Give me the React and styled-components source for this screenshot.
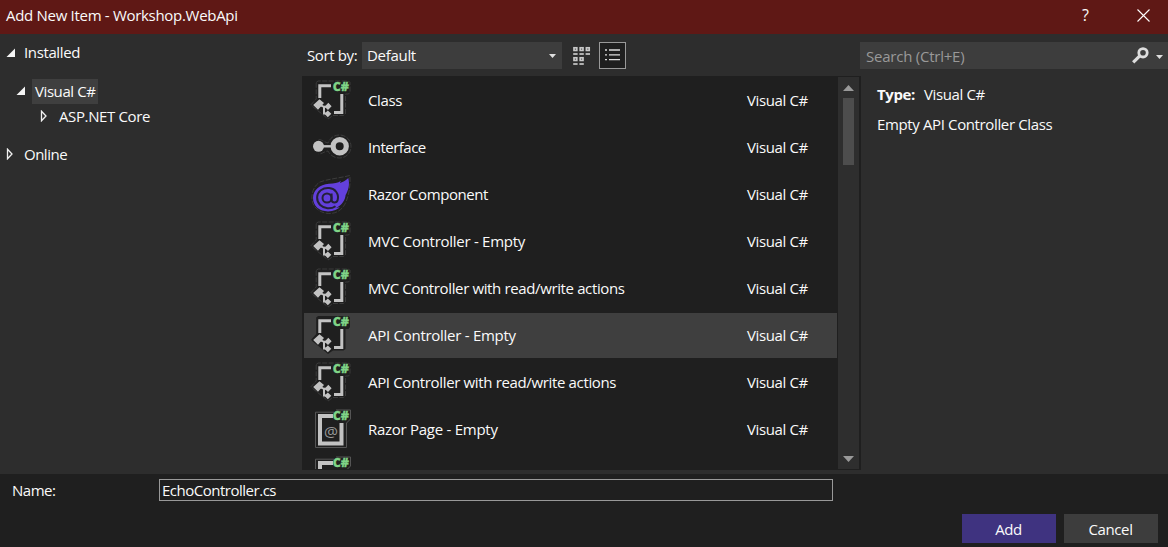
import React from "react";
import styled, { createGlobalStyle, css } from "styled-components";

const Global = createGlobalStyle`
  * { box-sizing: border-box; }
  body { margin: 0; background: #2d2d2d; }
`;
const Window = styled.div`
  width: 1168px; height: 547px; display: flex; flex-direction: column; overflow: hidden;
  background: #2d2d2d; color: #fafafa;
  font: 15px/20px "Open Sans", "Noto Sans", sans-serif;
`;
const Label = styled.span`
  white-space: nowrap; letter-spacing: ${(p) => p.$ls ?? -0.37}px; font-weight: ${(p) => (p.$bold ? 700 : 400)};
  ${(p) => !p.$low && css`margin: -1px 0 1px;`}
`;
const TitleBar = styled.header`
  height: 34px; flex: none; display: flex; align-items: center; background: #5f1815; padding: 0 18px 3px 6px;
`;
const TitleButtons = styled.div`display: flex; align-items: center; gap: 48px; margin-left: auto;`;
const Help = styled.span`font-size: 16px; margin-top: -2px;`;
const Body = styled.main`height: 440px; flex: none; display: flex;`;
const Tree = styled.nav`width: 302px; padding-top: 9px; display: flex; flex-direction: column; align-items: flex-start;`;
const TreeItem = styled.div`
  display: flex; align-items: center; height: 20px;
  margin: ${(p) => p.$top}px 0 0 ${(p) => p.$left}px; gap: ${(p) => p.$gap}px;
`;
const Selected = styled.div`width: 66px; height: 25px; padding: 3px 0 0 3px; background: #3f3f3f; display: flex;`;
const Center = styled.section`width: 558px; display: flex; flex-direction: column; padding-top: 8px;`;
const Toolbar = styled.div`height: 27px; display: flex; align-items: center; padding-left: 5px;`;
const SortLabel = styled.div`width: 55px; display: flex;`;
const Combo = styled.div`
  width: 200px; height: 27px; background: #3d3d3d; padding: 0 6px 0 5px;
  display: flex; align-items: center; justify-content: space-between;
`;
const ViewToggle = styled.div`
  width: 27px; height: 27px; display: flex; align-items: center; justify-content: center; margin-left: 8px;
  border: 1px solid #999; background: #1f1f1f;
`;
const ListFrame = styled.div`
  margin-top: 7px; height: 394px; width: 559px; background: #1f1f1f; padding: 1px 2px 1px 2px; display: flex; overflow: hidden;
`;
const Rows = styled.div`width: 533px; height: 392px; padding-top: 1px; overflow: hidden;`;
const Row = styled.div`
  height: 45px; margin-bottom: 2px; display: flex; align-items: center; padding: 0 29px 0 6px;
  ${(p) => p.$selected && css`background: #3f3f3f;`}
`;
const RowIcon = styled.svg`flex: none; margin-right: 16px; overflow: visible;`;
const Language = styled.div`width: 61px; margin-left: auto; display: flex;`;
const ScrollBar = styled.div`
  width: 21px; margin-left: 1px; background: #2e2e2e; display: flex; flex-direction: column; align-items: center; padding: 8px 0 7px;
`;
const Thumb = styled.div`width: 11px; height: 67px; background: #4d4d4d; margin: 7px 0 auto;`;
const Details = styled.aside`width: 308px; padding-top: 8px;`;
const Search = styled.div`
  height: 27px; background: #3d3d3d; color: #999; display: flex; align-items: center; padding: 2px 5px 0 6px;
  & > svg:first-of-type { margin: -2px 0 0 auto; }
`;
const Detail = styled.div`display: flex; gap: 9px; margin: ${(p) => p.$top}px 0 0 17px;`;
const Footer = styled.footer`flex: 1; background: #1f1f1f; padding: 5px 10px 0 12px;`;
const NameRow = styled.div`display: flex; align-items: center;`;
const NameLabel = styled.div`width: 147px; padding-top: 2px; display: flex;`;
const NameInput = styled.div`
  width: 674px; height: 22px; border: 1px solid #999; padding: 1px 2px; display: flex;
`;
const Actions = styled.div`display: flex; justify-content: flex-end; gap: 8px; margin-top: 13px;`;
const Button = styled.div`
  width: 94px; height: 29px; display: flex; align-items: center; justify-content: center; padding: 2px 1px 0 0;
  background: ${(p) => (p.$primary ? "#3f3380" : "#3d3d3d")};
`;
const IconText = styled.text`font-family: "Open Sans", sans-serif; font-weight: ${(p) => p.$weight ?? 800};`;

const Expanded = () => (
  <svg width="10" height="10"><path d="M9 0.5V9H0.5Z" fill="#f5f5f5" /></svg>
);
const Collapsed = () => (
  <svg width="7" height="12"><path d="M1.5 1.2V10.8L6 6Z" fill="none" stroke="#f0f0f0" strokeWidth="1.3" /></svg>
);
const Caret = ({ w = 7, h = 4, up, fill = "#e0e0e0" }) => (
  <svg width={w} height={h}><path d={up ? `M0 ${h}H${w}L${w / 2} 0Z` : `M0 0H${w}L${w / 2} ${h}Z`} fill={fill} /></svg>
);
const CSharp = () => (
  <IconText x="22.8" y="11" fontSize="12.5" textLength="16.2" lengthAdjust="spacingAndGlyphs" fill="#7fd487" stroke="#7fd487" strokeWidth="0.3">C#</IconText>
);
const halo = { fill: "none", stroke: "#434343", strokeWidth: 0.8, strokeDasharray: "5 1.5" };

function ClassIcon({ selected }) {
  const outline = "M6.2 2.5L8 1H38.5L40 2.5V12L38.5 14H35.5V34L33.5 35.5H23L18 39L12 34L2 26L1.2 24.5L6.2 19Z";
  return (
    <RowIcon width="42" height="42" viewBox="0 0 42 42">
      <path d={outline} {...(selected ? { fill: "#1f1f1f" } : halo)} />
      <path d="M9.8 18V5.7H21M31.8 14V32.5H24" fill="none" stroke="#c2c2c2" strokeWidth="3" />
      <path d="M3.2 25L9.5 19.2L14 23L8 29.8ZM18.3 22.8L21.6 26.2L18 30L14.6 26.8ZM17.8 30.4L21.3 33.8L17.8 37.2L14.4 33.8Z" fill="#c2c2c2" />
      <path d="M10 25L14 26.8H18M14 26V33.6H18" fill="none" stroke="#c2c2c2" strokeWidth="2" />
      <CSharp />
    </RowIcon>
  );
}
const InterfaceIcon = () => (
  <RowIcon width="42" height="42" viewBox="0 1 42 42">
    <path d="M8.7 13.5C12 13.5 14 16 18 17C20 12 24 9 29.5 9C36 9 41 14 41 20.5C41 27 36 32 29.5 32C24 32 20 29 18 25C14 25.5 12 28 8.7 28" {...halo} />
    <circle cx="8.5" cy="20.3" r="5.5" fill="#c2c2c2" />
    <path d="M8 20.3H22" stroke="#c2c2c2" strokeWidth="2.4" />
    <circle cx="29.7" cy="20.3" r="6.6" fill="none" stroke="#c2c2c2" strokeWidth="5.2" />
  </RowIcon>
);
const RazorIcon = () => (
  <RowIcon width="42" height="42" viewBox="0 0 42 42">
    <path d="M39.8 1.5C30 4 18 5 10 8C0 14 0 29 6 34C14 42 27 41 33 33C38 27 41 12 39.8 1.5Z" {...halo} />
    <path d="M38.3 4C35.8 6.8 32.5 8.3 29.8 9L31 6.8C28 9.3 24 9.4 19 9.8C9.5 10.5 3.2 16.5 3 23.8C2.9 32 9.5 37.4 18 37.4C23.5 37.4 28 35.6 30.5 32.6C29 33.6 27.5 34 26 34C32 31 35.2 26 35.6 21C38.4 16.5 40 10.5 38.3 4Z" fill="#6340dc" />
    <path d="M25.5 32.2C21 35.3 14 34.8 10.2 31C5.8 26.5 6.2 19.8 10.8 16.3C15.8 12.7 23 13.5 26.3 18C28 20.4 28.4 23.3 27.6 26.2C26.8 29 22.2 29.3 21.6 26.2V19.5" fill="none" stroke="#242038" strokeWidth="2" />
    <circle cx="17" cy="24" r="4.5" fill="none" stroke="#242038" strokeWidth="2" />
  </RowIcon>
);
const PageIcon = () => (
  <RowIcon width="42" height="42" viewBox="0 0 42 42">
    <path d="M24 3.2H5.5V38.5H36.5V14L40.5 10V1H26" fill="none" stroke="#555" strokeWidth="1" />
    <path d="M23 7H10V34.5H31.5V14" fill="none" stroke="#c2c2c2" strokeWidth="4" />
    <IconText $weight={400} x="14" y="27.5" fontSize="15" textLength="14" lengthAdjust="spacingAndGlyphs" fill="#999">@</IconText>
    <CSharp />
  </RowIcon>
);
const GridSvg = styled.svg`margin-left: 11px;`;
const GridIcon = () => (
  <GridSvg width="18" height="20" viewBox="0 0 18 20">
    {[[0, 0], [1, 0], [2, 0], [0, 1], [1, 1]].map(([c, r]) => (
      <g key={`${c}${r}`} fill="none" stroke="#c8c8c8">
        <rect x={1 + c * 6.2} y={1.8 + r * 10} width="2.8" height="2.6" strokeWidth="1.7" />
        <path d={`M${0.2 + c * 6.2} ${8 + r * 10}h4.4`} strokeWidth="1.7" />
      </g>
    ))}
  </GridSvg>
);

const items = [
  ["Class", ClassIcon],
  ["Interface", InterfaceIcon, false, -0.5],
  ["Razor Component", RazorIcon, false, -0.43],
  ["MVC Controller - Empty", ClassIcon, false, -0.27],
  ["MVC Controller with read/write actions", ClassIcon],
  ["API Controller - Empty", ClassIcon, true, -0.27],
  ["API Controller with read/write actions", ClassIcon, false, -0.35],
  ["Razor Page - Empty", PageIcon, false, -0.27],
];

export default function App() {
  return (
    <Window>
      <Global />
      <TitleBar>
        <Label $ls={-0.3}>Add New Item - Workshop.WebApi</Label>
        <TitleButtons>
          <Help>?</Help>
          <svg width="13" height="13"><path d="M0.5 0.5L12.5 12.5M12.5 0.5L0.5 12.5" stroke="#fff" strokeWidth="1.1" /></svg>
        </TitleButtons>
      </TitleBar>
      <Body>
        <Tree>
          <TreeItem $top={0} $left={6} $gap={8}><Expanded /><Label>Installed</Label></TreeItem>
          <TreeItem $top={18} $left={16} $gap={6}><Expanded /><Selected><Label $ls={-0.42}>Visual C#</Label></Selected></TreeItem>
          <TreeItem $top={5} $left={40} $gap={12}><Collapsed /><Label $low>ASP.NET Core</Label></TreeItem>
          <TreeItem $top={18} $left={6} $gap={11}><Collapsed /><Label $low $ls={-0.5}>Online</Label></TreeItem>
        </Tree>
        <Center>
          <Toolbar>
            <SortLabel><Label>Sort by:</Label></SortLabel>
            <Combo><Label $ls={-0.3}>Default</Label><Caret /></Combo>
            <GridIcon />
            <ViewToggle>
              <svg width="15" height="15"><path d="M0 2H2M0 6.8H2M0 11.7H2M4 2H15M4 6.8H15M4 11.7H15" stroke="#ddd" strokeWidth="1.3" /></svg>
            </ViewToggle>
          </Toolbar>
          <ListFrame>
            <Rows>
              {items.map(([name, Icon, selected, spacing]) => (
                <Row key={name} $selected={selected}>
                  <Icon selected={selected} />
                  <Label $ls={spacing}>{name}</Label>
                  <Language><Label>Visual C#</Label></Language>
                </Row>
              ))}
              <Row><PageIcon /></Row>
            </Rows>
            <ScrollBar><Caret w={11} h={6} up fill="#999" /><Thumb /><Caret w={11} h={6} fill="#999" /></ScrollBar>
          </ListFrame>
        </Center>
        <Details>
          <Search>
            <Label $ls={-0.23}>Search (Ctrl+E)</Label>
            <svg width="17" height="17"><circle cx="11" cy="5.8" r="4.2" fill="none" stroke="#ddd" strokeWidth="2.8" /><path d="M7.8 8.8L1.2 15.3" stroke="#ddd" strokeWidth="3.2" /></svg>
            <svg width="14" height="4"><path d="M7 0h7l-3.5 4z" fill="#ddd" /></svg>
          </Search>
          <Detail $top={16}><Label $bold>Type:</Label><Label>Visual C#</Label></Detail>
          <Detail $top={10}><Label>Empty API Controller Class</Label></Detail>
        </Details>
      </Body>
      <Footer>
        <NameRow>
          <NameLabel><Label $ls={-0.5}>Name:</Label></NameLabel>
          <NameInput><Label $ls={-0.49}>EchoController.cs</Label></NameInput>
        </NameRow>
        <Actions><Button $primary><Label>Add</Label></Button><Button><Label>Cancel</Label></Button></Actions>
      </Footer>
    </Window>
  );
}
